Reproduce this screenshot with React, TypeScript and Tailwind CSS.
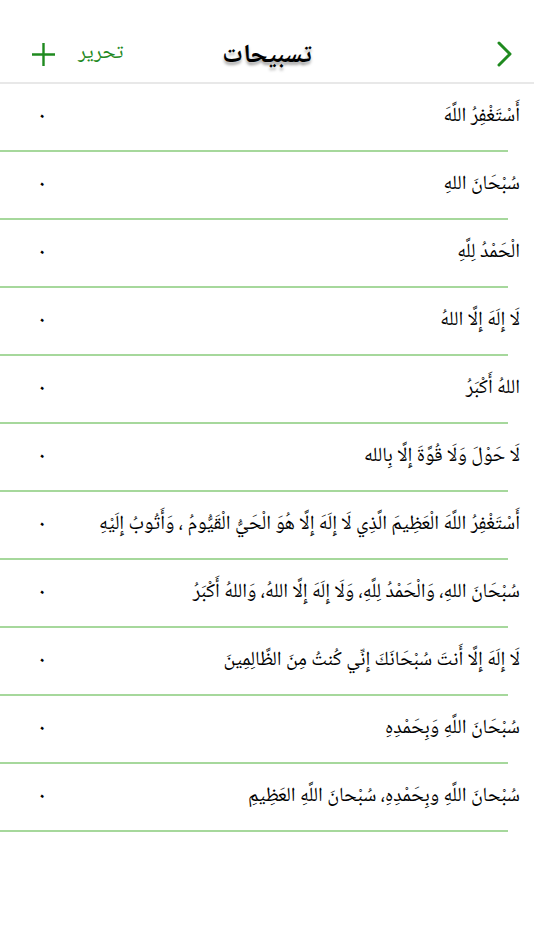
import React from "react";

const items = [
  "أَسْتَغْفِرُ اللَّهَ",
  "سُبْحَانَ اللهِ",
  "الْحَمْدُ لِلَّهِ",
  "لَا إِلَهَ إِلَّا اللهُ",
  "اللهُ أَكْبَرُ",
  "لَا حَوْلَ وَلَا قُوَّةَ إِلَّا بِالله",
  "أَسْتَغْفِرُ اللَّهَ الْعَظِيمَ الَّذِي لَا إِلَهَ إِلَّا هُوَ الْحَيُّ الْقَيُّومُ ، وَأَتُوبُ إِلَيْهِ",
  "سُبْحَانَ اللهِ، وَالْحَمْدُ لِلَّهِ، وَلَا إِلَهَ إِلَّا اللهُ، وَاللهُ أَكْبَرُ",
  "لَا إِلَهَ إِلَّا أَنتَ سُبْحَانَكَ إِنِّي كُنتُ مِنَ الظَّالِمِينَ",
  "سُبْحَانَ اللَّهِ وَبِحَمْدِهِ",
  "سُبْحانَ اللَّهِ وبِحَمْدِهِ، سُبْحانَ اللَّهِ العَظِيمِ",
];

const arabic = {
  fontFamily: '"Noto Naskh Arabic", "Noto Sans Arabic", "DejaVu Sans", serif',
};

export default function App() {
  return (
    <div className="min-h-[950px] w-[534px] bg-white" style={arabic}>
      <div className="relative flex h-[84px] items-center border-b-2 border-[#e8e8e8] pt-[26px]">
        <div className="flex items-center gap-[22px] pl-[31px]">
          <svg width="25" height="25" viewBox="0 0 25 25">
            <path d="M12.5 1v23M1 12.5h23" stroke="#1f8a1f" strokeWidth="2.4" />
          </svg>
          <span dir="rtl" className="text-[21px] text-[#1f8a1f]">
            تحرير
          </span>
        </div>
        <span
          dir="rtl"
          className="absolute left-1/2 top-[37px] -translate-x-1/2 text-[26px] font-bold text-black [text-shadow:0_3px_3px_rgba(0,0,0,0.35)]"
        >
          تسبيحات
        </span>
        <svg
          className="ml-auto mr-[21px]"
          width="16"
          height="26"
          viewBox="0 0 16 26"
        >
          <path
            d="M2 2l11 11L2 24"
            fill="none"
            stroke="#1f8a1f"
            strokeWidth="3"
            strokeLinecap="round"
            strokeLinejoin="round"
          />
        </svg>
      </div>
      <ul>
        {items.map((t) => (
          <li key={t} className="w-[508px] border-b-2 border-[#a6d89c]">
            <div
              dir="rtl"
              className="flex h-[66px] w-[534px] items-center justify-between pl-[38px] pr-[14px]"
            >
              <span className="whitespace-nowrap text-[20px] text-black">{t}</span>
              <span className="text-[16px] font-bold text-black">٠</span>
            </div>
          </li>
        ))}
      </ul>
    </div>
  );
}
